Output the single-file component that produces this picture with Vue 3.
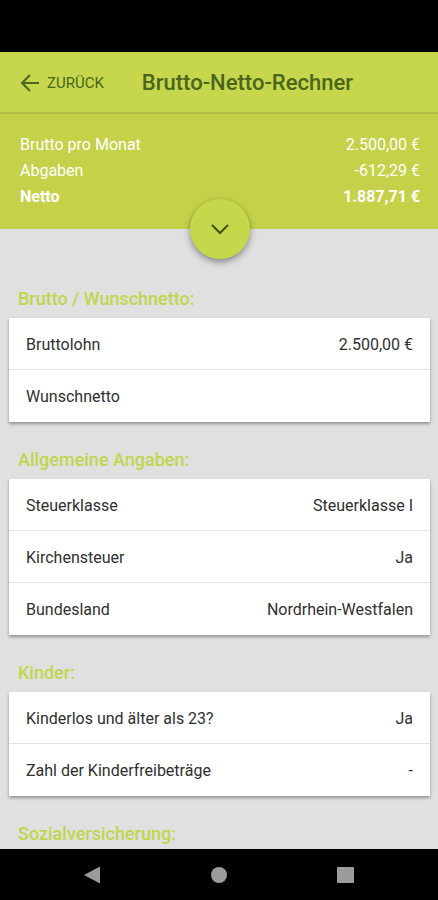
<script setup>
import { reactive, ref } from 'vue'

const summary = [
  { label: 'Brutto pro Monat', value: '2.500,00 €' },
  { label: 'Abgaben', value: '-612,29 €' },
  { label: 'Netto', value: '1.887,71 €', total: true },
]

const expanded = ref(false)

const sections = reactive([
  {
    title: 'Brutto / Wunschnetto:',
    fields: [
      { id: 'brutto', label: 'Bruttolohn', value: '2.500,00 €' },
      { id: 'wunschnetto', label: 'Wunschnetto', value: '' },
    ],
  },
  {
    title: 'Allgemeine Angaben:',
    fields: [
      {
        id: 'steuerklasse',
        label: 'Steuerklasse',
        value: 'Steuerklasse I',
        options: ['Steuerklasse I', 'Steuerklasse II', 'Steuerklasse III'],
      },
      { id: 'kirchensteuer', label: 'Kirchensteuer', value: 'Ja', options: ['Ja', 'Nein'] },
      {
        id: 'bundesland',
        label: 'Bundesland',
        value: 'Nordrhein-Westfalen',
        options: ['Bayern', 'Hessen', 'Nordrhein-Westfalen'],
      },
    ],
  },
  {
    title: 'Kinder:',
    fields: [
      { id: 'kinderlos', label: 'Kinderlos und älter als 23?', value: 'Ja', options: ['Ja', 'Nein'] },
      { id: 'freibetraege', label: 'Zahl der Kinderfreibeträge', value: '-', options: ['-', '0,5', '1,0'] },
    ],
  },
  { title: 'Sozialversicherung:', fields: [] },
])
</script>

<template>
  <div class="screen">
    <div class="status-bar"></div>

    <header class="app-bar">
      <button class="back" type="button">
        <svg class="back-icon" viewBox="0 0 20 20" aria-hidden="true">
          <path d="M19 10H2M10 2L2 10l8 8" />
        </svg>
        <span>ZURÜCK</span>
      </button>
      <h1 class="title">Brutto-Netto-Rechner</h1>
    </header>

    <section class="summary">
      <dl class="totals">
        <div v-for="row in summary" :key="row.label" class="total-row" :class="{ strong: row.total }">
          <dt>{{ row.label }}</dt>
          <dd>{{ row.value }}</dd>
        </div>
      </dl>
      <button
        class="expand"
        type="button"
        aria-label="Details anzeigen"
        :aria-expanded="expanded"
        @click="expanded = !expanded"
      >
        <svg class="expand-icon" viewBox="0 0 20 12" aria-hidden="true">
          <path d="M2 2l8 8 8-8" />
        </svg>
      </button>
    </section>

    <main class="content">
      <section v-for="section in sections" :key="section.title" class="group">
        <h2 class="group-title">{{ section.title }}</h2>
        <div v-if="section.fields.length" class="card">
          <div v-for="field in section.fields" :key="field.id" class="field">
            <label :for="field.id">{{ field.label }}</label>
            <select v-if="field.options" :id="field.id" v-model="field.value" class="control">
              <option v-for="option in field.options" :key="option">{{ option }}</option>
            </select>
            <input v-else :id="field.id" v-model="field.value" class="control" type="text" />
          </div>
        </div>
      </section>
    </main>

    <nav class="nav-bar">
      <button class="nav-button" type="button" aria-label="Zurück">
        <svg viewBox="0 0 18 18" aria-hidden="true"><path d="M16 0.5v17L0 9z" /></svg>
      </button>
      <button class="nav-button" type="button" aria-label="Startseite">
        <svg viewBox="0 0 18 18" aria-hidden="true"><circle cx="9" cy="9" r="8" /></svg>
      </button>
      <button class="nav-button" type="button" aria-label="Übersicht">
        <svg viewBox="0 0 18 18" aria-hidden="true"><rect x="1" y="1" width="17" height="16" rx="1" /></svg>
      </button>
    </nav>
  </div>
</template>

<style>
body {
  margin: 0;
  background: #e0e0e0;
}
</style>

<style scoped>
.screen {
  display: flex;
  flex-direction: column;
  height: 100vh;
  overflow: hidden;
  background: #e0e0e0;
  color: #303030;
  font-family: Roboto, "Liberation Sans", sans-serif;
  font-size: 16px;
  line-height: 26px;
}

button {
  margin: 0;
  padding: 0;
  border: 0;
  background: none;
  color: inherit;
  font: inherit;
  cursor: pointer;
}

.status-bar {
  flex: none;
  height: 52px;
  background: #000;
}

.app-bar {
  display: flex;
  flex: none;
  align-items: center;
  gap: 38px;
  box-sizing: border-box;
  height: 62px;
  padding: 2px 20px 0;
  border-bottom: 2px solid #adbc42;
  background: #c6d74d;
  color: #4a661c;
}

.back {
  display: flex;
  align-items: center;
  gap: 7px;
  font-size: 15px;
}

.back-icon {
  width: 20px;
  height: 20px;
  fill: none;
  stroke: currentColor;
  stroke-width: 2;
}

.title {
  margin: 0;
  font-size: 22px;
  font-weight: 500;
}

.summary {
  position: relative;
  flex: none;
  padding: 18px 18px 19px 20px;
  background: #c5d249;
  color: #fff;
}

.totals {
  margin: 0;
}

.total-row {
  display: flex;
  justify-content: space-between;
}

.total-row dd {
  margin: 0;
}

.strong {
  font-weight: 700;
}

.expand {
  position: absolute;
  bottom: -30px;
  left: calc(50% - 29px);
  display: flex;
  align-items: center;
  justify-content: center;
  width: 60px;
  height: 60px;
  border-radius: 50%;
  background: #c5d84c;
  box-shadow: 0 3px 7px rgba(0, 0, 0, 0.4);
  color: #3f5214;
}

.expand-icon {
  width: 20px;
  height: 12px;
  fill: none;
  stroke: currentColor;
  stroke-width: 2;
}

.content {
  flex: 1;
  min-height: 0;
  padding: 52px 8px 0 9px;
  overflow: hidden;
}

.group {
  padding-bottom: 20px;
}

.group-title {
  margin: 0;
  padding: 5px 9px 6px;
  color: #c0d64e;
  font-size: 18px;
  font-weight: 500;
}

.card {
  background: #fff;
  box-shadow: 0 2px 3px rgba(0, 0, 0, 0.35);
}

.field {
  display: flex;
  align-items: center;
  justify-content: space-between;
  gap: 16px;
  height: 52px;
  box-sizing: border-box;
  padding: 1px 17px 0;
}

.field:not(:last-child) {
  box-shadow: inset 0 -1px #e4e4e4;
}

.field label {
  flex: none;
}

.control {
  flex: 1;
  min-width: 0;
  margin: 0;
  padding: 0;
  border: 0;
  outline: 0;
  appearance: none;
  background: transparent;
  color: inherit;
  font: inherit;
  text-align: right;
  text-align-last: right;
}

.nav-bar {
  display: flex;
  flex: none;
  align-items: center;
  justify-content: center;
  gap: 108px;
  height: 51px;
  background: #000;
}

.nav-button {
  display: flex;
}

.nav-button svg {
  width: 18px;
  height: 18px;
  fill: #9c9c9c;
}
</style>
